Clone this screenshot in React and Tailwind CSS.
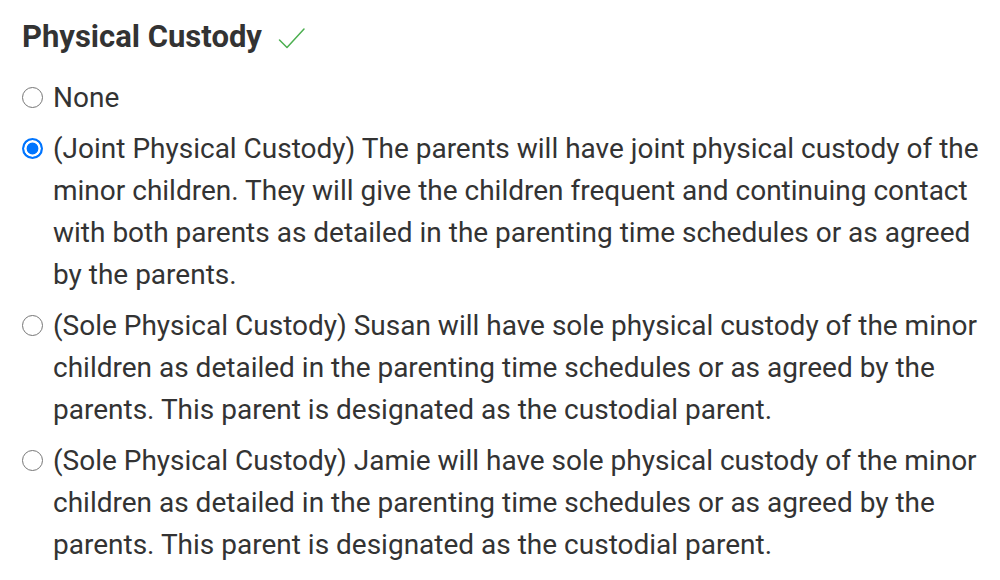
import React, { useState } from 'react';

const OPTIONS = [
  { id: 'none', label: 'None' },
  {
    id: 'joint',
    label:
      '(Joint Physical Custody) The parents will have joint physical custody of the minor children. They will give the children frequent and continuing contact with both parents as detailed in the parenting time schedules or as agreed by the parents.',
  },
  {
    id: 'sole-susan',
    label:
      '(Sole Physical Custody) Susan will have sole physical custody of the minor children as detailed in the parenting time schedules or as agreed by the parents. This parent is designated as the custodial parent.',
  },
  {
    id: 'sole-jamie',
    label:
      '(Sole Physical Custody) Jamie will have sole physical custody of the minor children as detailed in the parenting time schedules or as agreed by the parents. This parent is designated as the custodial parent.',
  },
];

export default function App() {
  const [value, setValue] = useState('joint');

  return (
    <div
      className="min-h-[580px] w-[1000px] bg-white pl-[22px] pr-[16px] pt-[18px] text-[#333333]"
      style={{ fontFamily: 'Roboto, "Liberation Sans", sans-serif' }}
    >
      <div className="flex items-center gap-[16px]">
        <h2 className="text-[31px] font-bold leading-[38px]">Physical Custody</h2>
        <svg width="28" height="22" viewBox="0 0 28 22" fill="none" className="mt-[2px]">
          <path d="M1.5 13 L9 20.5 L26 2" stroke="#4caf50" strokeWidth="1.5" strokeLinecap="round" strokeLinejoin="round" />
        </svg>
      </div>

      <fieldset className="mt-[21px] flex flex-col gap-[9px]">
        {OPTIONS.map((opt) => (
          <label key={opt.id} className="flex cursor-pointer items-start gap-[10px]">
            {/* custom-drawn radio so the ring/dot sizes match the screenshot */}
            <input
              type="radio"
              name="physical-custody"
              checked={value === opt.id}
              onChange={() => setValue(opt.id)}
              className="m-0 mt-[10px] h-[21px] w-[21px] shrink-0 cursor-pointer appearance-none rounded-full border-[1.8px] border-[#767676] bg-white checked:border-[2.6px] checked:border-[#0075ff] checked:bg-[#0075ff] checked:shadow-[inset_0_0_0_2.6px_#ffffff]"
            />
            <span className="text-[28px] leading-[42px]">{opt.label}</span>
          </label>
        ))}
      </fieldset>
    </div>
  );
}
